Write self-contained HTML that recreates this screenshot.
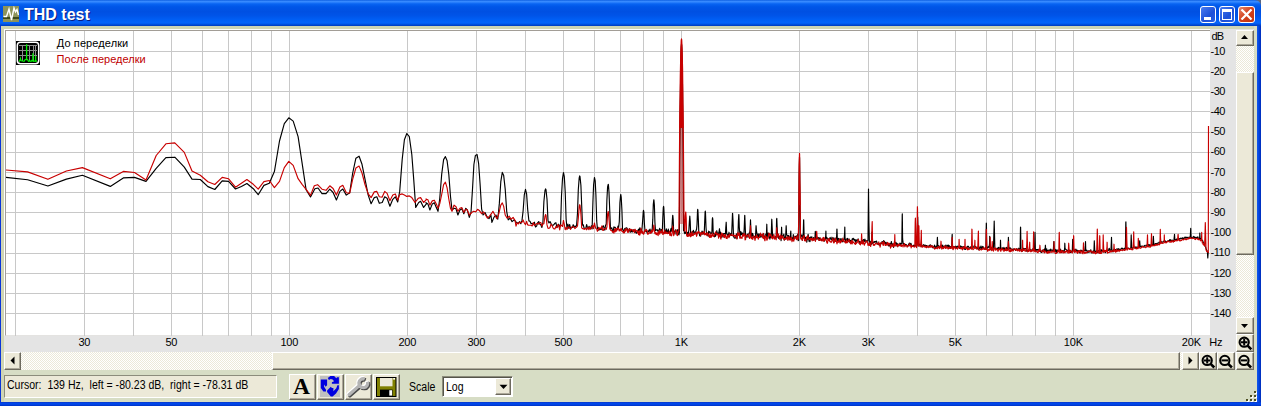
<!DOCTYPE html>
<html><head><meta charset="utf-8"><title>THD test</title>
<style>
html,body{margin:0;padding:0;}
body{width:1261px;height:406px;overflow:hidden;position:relative;background:#d7ddc5;font-family:"Liberation Sans",sans-serif;}
.abs{position:absolute;}
#title{left:0;top:0;width:1261px;height:26px;background:linear-gradient(180deg,#0a5ce0 0%,#3a8cff 5%,#2a80fc 9%,#0864f2 15%,#0056e8 26%,#0050e2 45%,#0054e8 60%,#005ef4 75%,#0464fa 86%,#025cf0 91%,#004cd8 95%,#003cbc 100%);}
#ttext{left:24px;top:4.5px;font-weight:bold;font-size:16px;line-height:19px;color:#fff;text-shadow:1px 1px 0 #0a1a80;white-space:nowrap;}
#bl{left:0;top:26px;width:1px;height:380px;background:#0a35d8;}
#br{left:1256.6px;top:26px;width:4.4px;height:380px;background:linear-gradient(90deg,#1458ec,#0044e0 50%,#002cb8);}
#bb{left:0;top:402px;width:1261px;height:4px;background:linear-gradient(180deg,#0a34c4 0%,#0048ec 30%,#0044e4 60%,#0032c4 100%);}
.cb{top:6px;width:16px;height:17px;border-radius:3px;box-sizing:border-box;border:1px solid #fff;}
#plotframe{left:4px;top:29px;width:1250px;height:341px;background:#e4e4e4;}
.btn{background:#ece9d8;box-sizing:border-box;border:1px solid;border-color:#fff #6d6a5e #6d6a5e #fff;box-shadow:inset -1px -1px 0 #aca899;}
.track{background:#f6f5ec;background-image:conic-gradient(#fff 25%,#ece9d8 0 50%,#fff 0 75%,#ece9d8 0);background-size:2px 2px;}
#status{left:4px;top:375px;width:273px;height:23px;box-sizing:border-box;background:#ece9d8;border:1px solid;border-color:#8c8c7c #fff #fff #8c8c7c;}
#stext{left:7px;top:378px;font-size:12px;line-height:14px;color:#000;white-space:pre;transform:scaleX(.878);transform-origin:0 0;}
.nar{font-size:12px;line-height:14px;color:#000;white-space:pre;transform:scaleX(.878);transform-origin:0 0;}
.tb{top:374px;width:27px;height:26px;}
svg text{font-family:"Liberation Sans",sans-serif;font-size:11px;fill:#000;letter-spacing:-0.2px;}
</style></head><body>
<div id="title" class="abs"></div>
<svg class="abs" style="left:3px;top:6px" width="16" height="16" viewBox="0 0 16 16"><rect width="16" height="16" fill="#8d935a"/><rect y="11" width="16" height="2" fill="#3d4a1c"/><polyline points="0.5,10.5 3.5,10.5 6,3 8.5,14 11,2 12.5,6 14,3.5 15.5,9" fill="none" stroke="#fff" stroke-width="1.4"/></svg>
<div id="ttext" class="abs">THD test</div>
<div class="abs cb" style="left:1200px;background:linear-gradient(135deg,#4a7cf0,#1c50d8 60%,#2a62e4)"><div class="abs" style="left:3px;top:10px;width:7px;height:3px;background:#fff"></div></div>
<div class="abs cb" style="left:1219px;background:linear-gradient(135deg,#4a7cf0,#1c50d8 60%,#2a62e4)"><div class="abs" style="left:2px;top:2px;width:10px;height:11px;box-sizing:border-box;border:1px solid #fff;border-top-width:3px"></div></div>
<div class="abs cb" style="left:1238px;width:17px;background:linear-gradient(135deg,#e88a6c,#d2401c 50%,#c03410)"><svg class="abs" style="left:1px;top:2px" width="13" height="11" viewBox="0 0 13 11"><path d="M1.5 0.5 L11.5 10.5 M11.5 0.5 L1.5 10.5" stroke="#fff" stroke-width="2.2" fill="none"/></svg></div>
<svg class="abs" style="left:1253px;top:0" width="8" height="8" viewBox="0 0 8 8"><path d="M2 0H8V6A6 6 0 0 0 2 0z" fill="#5b6680"/></svg>
<div id="bl" class="abs"></div><div id="br" class="abs"></div><div id="bb" class="abs"></div>
<div class="abs" style="left:1px;top:26px;width:1253px;height:3px;background:#cfd5b4"></div><div class="abs" style="left:1px;top:26px;width:3px;height:376px;background:#cfd5b4"></div>
<div id="plotframe" class="abs"></div>
<svg class="abs" style="left:0;top:0" width="1261" height="406" viewBox="0 0 1261 406">
<rect x="4" y="29" width="1206" height="307" fill="#fff"/><rect x="4" y="335.5" width="1232" height="17" fill="#e4e4e4"/><rect x="5" y="30" width="1205" height="305.5" fill="#a29d96"/><rect x="6" y="31" width="1204" height="304.5" fill="#fff"/>
<g stroke="#c8c8c8" stroke-width="1" shape-rendering="crispEdges">
<line x1="15.5" y1="31" x2="15.5" y2="335.5"/>
<line x1="84.5" y1="31" x2="84.5" y2="335.5"/>
<line x1="133.5" y1="31" x2="133.5" y2="335.5"/>
<line x1="171.5" y1="31" x2="171.5" y2="335.5"/>
<line x1="202.5" y1="31" x2="202.5" y2="335.5"/>
<line x1="228.5" y1="31" x2="228.5" y2="335.5"/>
<line x1="251.5" y1="31" x2="251.5" y2="335.5"/>
<line x1="271.5" y1="31" x2="271.5" y2="335.5"/>
<line x1="289.5" y1="31" x2="289.5" y2="335.5"/>
<line x1="407.5" y1="31" x2="407.5" y2="335.5"/>
<line x1="476.5" y1="31" x2="476.5" y2="335.5"/>
<line x1="525.5" y1="31" x2="525.5" y2="335.5"/>
<line x1="563.5" y1="31" x2="563.5" y2="335.5"/>
<line x1="594.5" y1="31" x2="594.5" y2="335.5"/>
<line x1="620.5" y1="31" x2="620.5" y2="335.5"/>
<line x1="643.5" y1="31" x2="643.5" y2="335.5"/>
<line x1="663.5" y1="31" x2="663.5" y2="335.5"/>
<line x1="681.5" y1="31" x2="681.5" y2="335.5"/>
<line x1="799.5" y1="31" x2="799.5" y2="335.5"/>
<line x1="868.5" y1="31" x2="868.5" y2="335.5"/>
<line x1="917.5" y1="31" x2="917.5" y2="335.5"/>
<line x1="955.5" y1="31" x2="955.5" y2="335.5"/>
<line x1="986.5" y1="31" x2="986.5" y2="335.5"/>
<line x1="1012.5" y1="31" x2="1012.5" y2="335.5"/>
<line x1="1035.5" y1="31" x2="1035.5" y2="335.5"/>
<line x1="1055.5" y1="31" x2="1055.5" y2="335.5"/>
<line x1="1073.5" y1="31" x2="1073.5" y2="335.5"/>
<line x1="1191.5" y1="31" x2="1191.5" y2="335.5"/>
<line x1="6" y1="51.5" x2="1210" y2="51.5"/>
<line x1="6" y1="71.5" x2="1210" y2="71.5"/>
<line x1="6" y1="91.5" x2="1210" y2="91.5"/>
<line x1="6" y1="111.5" x2="1210" y2="111.5"/>
<line x1="6" y1="132.5" x2="1210" y2="132.5"/>
<line x1="6" y1="152.5" x2="1210" y2="152.5"/>
<line x1="6" y1="172.5" x2="1210" y2="172.5"/>
<line x1="6" y1="192.5" x2="1210" y2="192.5"/>
<line x1="6" y1="212.5" x2="1210" y2="212.5"/>
<line x1="6" y1="233.5" x2="1210" y2="233.5"/>
<line x1="6" y1="253.5" x2="1210" y2="253.5"/>
<line x1="6" y1="273.5" x2="1210" y2="273.5"/>
<line x1="6" y1="293.5" x2="1210" y2="293.5"/>
<line x1="6" y1="313.5" x2="1210" y2="313.5"/>
</g>
<g fill="none" stroke-width="1.15" stroke-linejoin="round">
<path stroke="#000" d="M6.0 177.4 L27.6 179.7 L47.9 186.0 L66.4 179.1 L82.4 175.3 L110.3 186.4 L123.3 177.9 L134.5 177.4 L146.0 181.4 L156.2 168.3 L165.9 157.6 L174.8 157.2 L184.3 167.1 L192.0 179.1 L200.3 179.5 L207.9 186.6 L214.8 189.5 L222.2 180.9 L228.6 181.4 L235.5 189.0 L241.4 186.5 L246.9 183.5 L253.3 188.7 L258.2 194.7 L263.9 185.4 L269.3 183.2 L274.4 171.6 L279.5 141.0 L284.3 123.7 L288.8 117.8 L293.2 121.1 L298.1 136.6 L302.1 163.2 L306.1 189.8 L310.5 196.9 L314.9 188.7 L318.0 188.0 L322.0 193.6 L326.0 193.6 L329.8 189.2 L333.1 192.5 L336.4 200.0 L339.9 191.4 L342.8 189.0 L346.3 195.1 L349.7 192.7 L352.7 173.0 L355.9 158.2 L359.1 156.2 L362.0 164.3 L365.0 179.1 L368.2 195.1 L371.1 203.7 L374.3 197.6 L376.8 196.8 L379.3 203.3 L382.2 202.5 L384.7 196.8 L387.1 198.3 L389.9 206.2 L392.8 199.3 L395.3 196.8 L397.7 202.0 L399.7 191.4 L402.2 159.4 L404.4 139.7 L406.8 133.5 L409.3 136.7 L411.8 154.5 L413.7 179.1 L415.7 207.4 L418.7 202.5 L420.6 201.3 L423.6 207.4 L426.6 203.7 L425.9 202.7 L427.9 203.9 L429.9 210.0 L432.3 203.9 L434.3 202.7 L436.3 207.6 L438.0 211.3 L439.7 199.0 L441.7 174.3 L443.6 159.6 L445.4 156.6 L447.1 160.8 L448.8 174.3 L450.5 196.5 L452.0 210.0 L454.0 208.3 L456.0 208.8 L457.9 215.0 L459.9 210.0 L461.9 208.8 L463.8 213.7 L465.8 208.3 L467.3 210.0 L469.3 217.4 L471.0 212.5 L472.5 189.1 L473.9 164.5 L475.4 155.4 L477.1 154.6 L478.6 163.3 L480.1 184.2 L481.6 208.8 L483.1 215.0 L485.0 212.5 L487.0 216.7 L489.0 218.7 L490.9 215.0 L491.9 222.4 L493.9 217.4 L495.9 215.0 L497.8 219.2 L499.3 203.9 L500.8 181.7 L502.3 172.4 L503.7 175.6 L505.2 189.1 L506.7 211.3 L508.2 219.9 L510.1 218.2 L512.1 221.6 L514.1 219.9 L516.0 221.9 L517.2 222.8 L518.4 223.0 L519.6 221.6 L520.8 223.7 L522.0 220.4 L523.1 211.0 L524.3 194.8 L525.5 189.4 L525.5 189.4 L526.6 193.9 L527.7 209.6 L528.9 220.9 L530.0 221.2 L531.1 223.7 L532.2 223.4 L533.3 223.9 L534.4 222.2 L535.5 227.0 L536.6 226.1 L537.6 222.8 L538.7 221.5 L539.8 224.0 L540.8 224.7 L541.9 227.5 L542.9 222.5 L543.9 201.5 L545.0 190.5 L545.6 188.9 L546.0 189.8 L547.0 199.3 L548.0 220.8 L549.0 223.0 L550.0 221.5 L551.0 223.6 L552.0 225.0 L553.0 225.4 L554.0 224.5 L554.9 223.2 L555.9 222.7 L556.8 227.2 L557.8 226.9 L558.7 224.2 L559.7 226.8 L560.6 224.9 L561.5 195.7 L562.5 178.7 L563.4 172.8 L563.5 172.7 L564.3 176.6 L565.2 191.6 L566.1 219.0 L567.0 228.3 L567.9 224.0 L568.8 228.4 L569.7 224.5 L570.6 228.7 L571.5 227.7 L572.4 227.5 L573.2 224.7 L574.1 227.3 L574.9 226.1 L575.8 226.6 L576.6 225.2 L577.5 213.0 L578.3 189.7 L579.2 177.9 L579.7 175.9 L580.0 176.5 L580.9 185.2 L581.7 205.8 L582.5 225.1 L583.3 224.8 L584.1 228.1 L585.0 228.7 L585.8 228.4 L586.6 224.5 L587.4 227.4 L588.1 229.0 L589.0 226.4 L589.7 227.5 L590.5 228.6 L591.3 225.9 L592.1 229.0 L592.9 202.6 L593.6 184.7 L594.4 177.8 L594.5 177.6 L595.2 180.9 L595.9 194.8 L596.7 220.9 L597.4 228.7 L598.2 227.4 L598.9 230.3 L599.7 228.3 L600.4 229.3 L601.1 229.7 L601.9 228.0 L602.6 226.6 L603.3 225.8 L604.1 228.0 L604.8 230.2 L605.5 225.4 L606.2 224.2 L606.9 199.7 L607.6 186.9 L608.2 184.3 L608.4 184.6 L609.0 192.3 L609.8 211.9 L610.5 229.0 L611.1 228.4 L611.8 227.8 L612.5 230.7 L613.2 231.4 L613.9 226.9 L614.6 227.4 L615.3 227.4 L615.9 228.6 L616.6 229.7 L617.3 229.6 L618.0 226.1 L618.6 227.5 L619.3 221.7 L619.9 202.7 L620.6 195.0 L620.8 194.6 L621.2 197.1 L621.9 209.8 L622.5 228.9 L623.2 230.2 L623.8 232.3 L624.5 228.9 L625.1 228.3 L625.8 228.1 L626.4 227.9 L627.0 228.1 L627.7 229.8 L628.3 231.0 L628.9 230.7 L629.5 228.7 L630.2 232.3 L630.8 229.3 L631.4 231.8 L632.0 229.8 L632.6 232.0 L633.2 231.3 L633.9 229.7 L634.5 232.5 L635.1 231.9 L635.7 231.5 L636.3 233.3 L636.9 232.0 L637.5 231.7 L638.0 230.3 L638.6 229.2 L639.2 231.2 L639.8 227.9 L640.4 229.0 L641.0 230.0 L641.6 231.7 L642.1 227.8 L642.7 219.9 L643.3 211.1 L643.5 210.4 L643.9 212.2 L644.4 223.6 L645.0 231.0 L645.6 230.7 L646.1 231.8 L646.7 230.0 L647.3 233.3 L647.8 231.8 L648.4 231.8 L648.9 230.1 L649.5 231.2 L650.0 229.1 L650.6 232.3 L651.1 232.6 L651.7 231.2 L652.2 229.6 L652.8 219.4 L653.3 204.3 L653.8 199.9 L653.9 199.9 L654.4 205.4 L654.9 222.2 L655.5 230.7 L656.0 230.1 L656.5 230.0 L657.1 229.6 L657.6 230.7 L658.1 231.4 L658.6 231.0 L659.2 229.6 L659.7 228.4 L660.2 230.3 L660.7 230.2 L661.3 229.5 L661.8 231.0 L662.3 231.4 L662.8 217.7 L663.3 207.6 L663.6 206.4 L663.8 207.6 L664.3 218.0 L664.8 233.1 L665.3 230.6 L665.8 232.2 L666.3 228.9 L666.9 231.7 L667.3 230.9 L667.8 232.7 L668.3 229.1 L668.8 233.4 L669.3 231.2 L669.8 233.5 L670.3 232.9 L670.8 229.1 L671.3 228.3 L671.8 231.3 L672.3 220.7 L672.7 215.3 L672.8 215.3 L673.2 219.6 L673.7 233.4 L674.2 232.8 L674.7 231.1 L675.1 231.4 L675.6 229.9 L676.1 234.2 L676.6 231.3 L677.0 232.0 L677.5 229.9 L678.0 229.6 L678.4 234.4 L678.9 234.8 L679.4 232.6 L679.8 163.1 L680.3 102.3 L680.8 65.0 L681.2 46.8 L681.5 44.0 L681.7 45.2 L682.1 59.2 L682.6 92.8 L683.0 149.4 L683.5 230.5 L684.0 230.5 L684.4 232.7 L684.9 233.6 L685.3 231.8 L685.8 233.2 L686.2 232.3 L686.6 234.7 L687.1 235.0 L687.5 232.4 L688.0 235.0 L688.5 232.2 L688.9 230.1 L689.4 221.4 L689.8 216.0 L689.8 216.0 L690.2 221.1 L690.7 235.2 L691.1 232.6 L691.6 235.1 L692.0 234.1 L692.5 231.5 L693.0 231.3 L693.4 230.4 L693.9 233.5 L694.3 233.9 L694.8 231.9 L695.2 233.6 L695.6 233.6 L696.1 230.1 L696.5 229.9 L697.0 224.8 L697.5 211.5 L697.7 209.4 L697.9 210.2 L698.4 220.8 L698.8 232.6 L699.2 233.1 L699.7 235.8 L700.1 233.9 L700.6 236.2 L701.0 232.7 L701.5 233.9 L702.0 231.1 L702.4 231.7 L702.9 233.9 L703.3 232.2 L703.8 233.2 L704.2 234.3 L704.6 224.2 L705.1 212.1 L705.3 211.0 L705.5 213.0 L706.0 227.3 L706.5 234.2 L706.9 234.6 L707.4 233.1 L707.8 235.4 L708.2 236.2 L708.7 231.1 L709.1 232.4 L709.6 231.9 L710.0 231.9 L710.5 233.4 L711.0 233.9 L711.4 233.2 L711.9 232.2 L712.3 219.6 L712.5 217.7 L712.8 219.2 L713.2 233.2 L713.6 233.1 L714.1 234.2 L714.5 236.8 L715.0 234.1 L715.5 236.3 L715.9 233.6 L716.4 234.6 L716.8 230.7 L717.2 233.4 L717.7 233.4 L718.1 233.1 L718.6 234.5 L719.0 232.1 L719.5 228.7 L719.5 228.7 L720.0 234.5 L720.4 232.0 L720.9 234.7 L721.3 237.3 L721.8 235.6 L722.2 235.1 L722.6 234.2 L723.1 237.3 L723.5 233.8 L724.0 233.5 L724.5 233.5 L724.9 233.7 L725.4 234.9 L725.8 227.5 L726.2 222.2 L726.2 222.5 L726.7 233.8 L727.1 234.5 L727.6 236.2 L728.0 234.1 L728.5 236.6 L729.0 232.2 L729.4 236.6 L729.9 234.3 L730.3 234.4 L730.8 233.4 L731.2 235.0 L731.6 235.5 L732.1 223.8 L732.5 213.4 L732.6 213.3 L733.0 220.6 L733.5 235.9 L733.9 237.1 L734.4 237.9 L734.8 238.2 L735.2 238.1 L735.7 237.3 L736.1 236.2 L736.6 233.8 L737.0 238.6 L737.5 233.5 L738.0 233.9 L738.4 221.2 L738.8 214.5 L738.9 214.7 L739.3 227.3 L739.8 233.5 L740.2 236.8 L740.6 231.6 L741.1 232.0 L741.5 234.7 L742.0 233.3 L742.5 233.0 L742.9 235.0 L743.4 234.2 L743.8 235.6 L744.2 228.4 L744.7 215.5 L744.8 215.4 L745.1 223.2 L745.6 236.5 L746.0 235.2 L746.5 235.8 L747.0 237.5 L747.4 234.4 L747.9 234.1 L748.3 236.0 L748.8 236.3 L749.2 232.9 L749.6 233.4 L750.1 229.6 L750.5 219.8 L750.5 219.8 L751.0 232.0 L751.5 235.2 L751.9 237.4 L752.4 233.3 L752.8 233.8 L753.2 235.6 L753.7 237.7 L754.1 236.6 L754.6 237.2 L755.0 236.0 L755.5 236.5 L756.0 227.1 L756.1 225.7 L756.4 230.5 L756.9 233.3 L757.3 236.1 L757.8 236.1 L758.2 233.8 L758.6 237.5 L759.1 237.4 L759.5 234.2 L760.0 234.8 L760.5 236.1 L760.9 237.3 L761.4 234.9 L761.8 235.6 L762.2 236.2 L762.7 234.7 L763.1 236.4 L763.6 233.6 L764.0 235.6 L764.5 238.0 L765.0 236.8 L765.4 235.9 L765.9 234.0 L766.3 237.7 L766.8 224.2 L767.2 237.4 L767.6 234.1 L768.1 233.0 L768.5 233.2 L769.0 236.9 L769.5 237.6 L769.9 239.2 L770.4 235.8 L770.8 233.9 L771.2 237.2 L771.7 220.4 L771.8 219.2 L772.1 226.0 L772.6 236.4 L773.0 234.3 L773.5 237.3 L774.0 237.8 L774.4 237.3 L774.9 237.8 L775.3 236.7 L775.8 236.7 L776.2 237.8 L776.6 219.3 L776.8 218.3 L777.1 226.2 L777.5 234.3 L778.0 237.5 L778.5 238.3 L778.9 235.9 L779.4 237.8 L779.8 237.1 L780.2 236.4 L780.7 235.5 L781.1 240.6 L781.6 227.2 L781.6 227.3 L782.0 238.2 L782.5 236.2 L783.0 235.8 L783.4 235.2 L783.9 234.2 L784.3 240.2 L784.8 237.0 L785.2 239.3 L785.6 237.7 L786.1 227.0 L786.2 225.7 L786.5 234.0 L787.0 235.1 L787.5 235.8 L787.9 236.5 L788.4 235.4 L788.8 236.2 L789.2 239.6 L789.7 237.6 L790.1 239.1 L790.6 233.4 L790.8 231.0 L791.0 237.7 L791.5 237.4 L792.0 239.8 L792.4 237.8 L792.9 239.4 L793.3 234.6 L793.8 239.9 L794.2 238.9 L794.6 237.7 L795.1 236.2 L795.5 236.6 L796.0 236.7 L796.5 237.0 L796.9 235.6 L797.4 236.1 L797.8 234.1 L798.2 240.6 L798.7 240.3 L799.1 176.2 L799.5 157.0 L799.6 158.3 L800.0 205.7 L800.5 236.1 L801.0 235.7 L801.4 236.2 L801.9 234.8 L802.3 240.3 L802.8 237.2 L803.2 235.9 L803.6 220.1 L803.7 219.8 L804.1 235.7 L804.5 236.7 L805.0 239.7 L805.5 237.4 L805.9 238.8 L806.4 237.1 L806.8 242.1 L807.2 238.6 L807.7 239.1 L808.1 234.3 L808.6 237.0 L809.0 241.2 L809.5 237.6 L810.0 241.7 L810.4 237.0 L810.9 237.1 L811.3 237.4 L811.8 236.8 L812.2 239.6 L812.6 238.8 L813.1 239.6 L813.5 237.5 L814.0 240.1 L814.5 239.0 L814.9 239.5 L815.3 231.4 L815.4 231.7 L815.8 237.9 L816.2 239.3 L816.7 236.6 L817.1 237.7 L817.6 238.4 L818.0 239.3 L818.5 237.6 L819.0 240.0 L819.4 240.4 L819.9 237.6 L820.3 239.6 L820.8 239.3 L821.2 239.6 L821.6 240.6 L822.1 239.7 L822.5 239.1 L823.0 239.1 L823.5 239.0 L823.9 240.5 L824.4 241.1 L824.8 238.9 L825.2 238.8 L825.7 236.1 L825.9 231.0 L826.1 239.1 L826.6 237.3 L827.0 237.9 L827.5 238.2 L828.0 239.5 L828.4 239.5 L828.9 239.0 L829.3 238.8 L829.8 238.1 L830.2 237.4 L830.6 239.2 L831.1 239.2 L831.5 239.5 L832.0 237.2 L832.5 238.9 L832.9 240.8 L833.4 238.3 L833.8 237.8 L834.2 238.7 L834.7 241.1 L835.1 239.7 L835.6 241.3 L836.0 238.0 L836.5 239.0 L836.9 229.0 L837.0 229.4 L837.4 240.7 L837.9 240.9 L838.3 238.4 L838.8 238.8 L839.2 241.6 L839.6 239.0 L840.1 241.5 L840.5 239.1 L841.0 238.5 L841.5 240.6 L841.9 241.2 L842.4 241.3 L842.8 242.0 L843.2 241.3 L843.7 239.0 L844.1 239.4 L844.6 233.4 L844.8 227.0 L845.0 237.2 L845.5 241.7 L846.0 240.5 L846.4 239.1 L846.9 240.6 L847.3 238.4 L847.8 238.8 L848.2 241.6 L848.6 239.9 L849.1 239.1 L849.5 241.0 L850.0 242.6 L850.5 240.4 L850.9 240.6 L851.4 241.5 L851.8 241.1 L852.2 238.8 L852.7 239.5 L853.1 238.3 L853.6 238.7 L854.0 240.1 L854.5 239.4 L855.0 240.5 L855.4 242.5 L855.9 239.5 L856.3 241.3 L856.8 240.2 L857.2 240.8 L857.6 240.5 L858.1 238.8 L858.5 240.4 L859.0 242.0 L859.5 241.5 L859.9 243.9 L860.4 242.0 L860.8 243.6 L861.2 241.6 L861.7 240.8 L862.1 241.5 L862.6 240.3 L863.0 240.9 L863.5 239.5 L864.0 241.0 L864.4 241.4 L864.9 239.1 L865.3 240.7 L865.8 241.0 L866.2 242.0 L866.6 240.6 L867.1 241.5 L867.5 240.7 L868.0 240.6 L868.5 189.5 L868.5 189.0 L868.9 222.2 L869.4 242.7 L869.8 242.5 L870.2 241.2 L870.7 243.9 L871.1 242.3 L871.6 244.3 L872.0 232.0 L872.0 232.5 L872.5 243.3 L873.0 242.7 L873.4 242.1 L873.9 242.4 L874.3 241.5 L874.8 242.2 L875.2 241.4 L875.6 242.0 L876.1 241.9 L876.5 241.0 L877.0 243.0 L877.5 243.3 L877.9 244.3 L878.4 243.5 L878.8 244.7 L879.2 243.6 L879.7 244.1 L880.1 245.6 L880.6 243.4 L881.0 243.3 L881.5 242.0 L882.0 243.8 L882.4 241.9 L882.9 241.5 L883.3 241.6 L883.8 240.6 L884.2 242.7 L884.6 241.6 L885.1 243.2 L885.5 244.1 L886.0 242.3 L886.5 243.3 L886.9 243.7 L887.4 243.5 L887.8 243.9 L888.2 244.8 L888.7 245.9 L889.1 244.1 L889.6 245.1 L890.0 246.2 L890.5 243.2 L891.0 243.2 L891.4 241.5 L891.9 245.7 L892.3 243.7 L892.8 244.8 L893.2 244.5 L893.6 247.5 L894.1 244.7 L894.5 241.4 L895.0 244.2 L895.5 243.5 L895.9 242.4 L896.4 244.4 L896.8 243.4 L897.2 246.4 L897.7 243.9 L898.1 245.8 L898.6 245.4 L899.0 245.9 L899.5 244.5 L900.0 243.0 L900.4 244.7 L900.9 244.1 L901.3 243.4 L901.8 243.9 L902.2 215.7 L902.3 213.8 L902.6 238.9 L903.1 242.8 L903.5 244.5 L904.0 243.5 L904.5 245.8 L904.9 245.2 L905.4 244.4 L905.8 245.0 L906.2 244.6 L906.7 245.3 L907.1 245.8 L907.6 246.6 L908.0 246.0 L908.5 244.6 L909.0 243.7 L909.4 243.1 L909.9 245.1 L910.3 244.5 L910.8 243.3 L911.2 244.1 L911.6 246.1 L912.1 246.3 L912.5 246.1 L913.0 246.5 L913.5 245.2 L913.9 246.2 L914.4 245.6 L914.8 245.2 L915.2 245.3 L915.7 245.2 L916.1 246.5 L916.6 245.7 L917.0 244.6 L917.5 224.8 L917.7 217.0 L918.0 229.4 L918.4 246.0 L918.9 245.1 L919.3 244.2 L919.8 244.9 L920.2 244.6 L920.6 244.4 L921.1 246.4 L921.5 246.0 L922.0 245.7 L922.5 246.0 L922.9 246.2 L923.4 244.7 L923.8 244.8 L924.2 245.8 L924.7 245.7 L925.1 245.1 L925.6 245.5 L926.0 246.0 L926.5 245.5 L927.0 247.2 L927.4 246.9 L927.9 246.4 L928.3 246.3 L928.8 245.8 L929.2 246.0 L929.6 245.2 L930.1 246.2 L930.5 244.8 L931.0 246.0 L931.5 246.5 L931.9 245.9 L932.4 247.6 L932.8 246.1 L933.2 247.9 L933.7 247.2 L934.1 246.8 L934.6 245.1 L935.0 246.9 L935.5 247.8 L936.0 247.1 L936.4 246.2 L936.9 247.9 L937.3 239.2 L937.4 237.3 L937.8 246.0 L938.2 246.5 L938.6 245.7 L939.1 246.3 L939.5 246.7 L940.0 247.4 L940.5 247.6 L940.9 246.0 L941.4 245.4 L941.8 245.3 L942.2 247.5 L942.7 245.1 L943.1 246.9 L943.6 247.4 L944.0 247.0 L944.5 246.0 L945.0 247.3 L945.4 246.6 L945.9 245.0 L946.3 245.7 L946.8 246.0 L947.2 247.2 L947.6 245.2 L948.1 246.6 L948.5 245.1 L949.0 247.4 L949.5 245.9 L949.9 247.9 L950.4 247.1 L950.8 246.6 L951.2 246.6 L951.7 247.2 L952.1 234.8 L952.2 234.3 L952.6 247.0 L953.0 246.5 L953.5 247.2 L954.0 247.1 L954.4 246.7 L954.9 247.2 L955.3 247.9 L955.8 246.1 L956.2 246.4 L956.6 248.0 L957.1 247.1 L957.5 246.4 L958.0 246.0 L958.5 247.0 L958.9 246.8 L959.4 248.5 L959.8 247.6 L960.2 247.7 L960.7 245.9 L961.1 247.1 L961.6 246.7 L962.0 248.9 L962.5 247.1 L963.0 246.6 L963.4 246.6 L963.9 247.7 L964.3 249.3 L964.8 248.2 L965.2 248.8 L965.6 249.4 L966.1 247.0 L966.5 247.5 L967.0 248.1 L967.5 246.3 L967.9 246.2 L968.4 246.3 L968.8 247.3 L969.2 248.0 L969.7 247.9 L970.1 248.4 L970.6 246.9 L971.0 247.5 L971.5 248.8 L972.0 246.6 L972.4 247.4 L972.9 247.6 L973.3 247.0 L973.8 246.9 L974.2 245.6 L974.6 246.7 L975.1 247.2 L975.5 246.5 L976.0 247.2 L976.5 247.5 L976.9 247.2 L977.4 247.7 L977.8 249.0 L978.2 248.5 L978.7 249.8 L979.1 246.9 L979.6 248.3 L980.0 248.6 L980.5 247.6 L981.0 246.0 L981.4 248.4 L981.9 248.7 L982.3 247.0 L982.8 246.4 L983.2 248.0 L983.6 247.2 L984.1 248.9 L984.5 248.9 L985.0 249.4 L985.5 247.6 L985.9 247.9 L986.3 223.1 L986.4 223.6 L986.8 247.9 L987.2 248.3 L987.7 247.2 L988.1 247.5 L988.6 246.6 L989.0 247.3 L989.5 244.1 L989.7 236.3 L990.0 247.4 L990.4 247.5 L990.9 249.9 L991.3 248.6 L991.8 247.6 L992.2 248.7 L992.6 248.1 L993.1 249.0 L993.5 246.7 L994.0 228.9 L994.2 221.1 L994.5 233.5 L994.9 248.9 L995.4 249.1 L995.8 248.3 L996.2 249.2 L996.7 249.3 L997.1 248.8 L997.6 248.0 L998.0 249.3 L998.5 247.4 L999.0 250.0 L999.4 247.9 L999.9 249.1 L1000.3 248.0 L1000.5 240.2 L1000.8 249.5 L1001.2 249.3 L1001.6 248.9 L1002.1 247.9 L1002.5 247.9 L1003.0 249.2 L1003.5 249.0 L1003.9 247.3 L1004.4 249.4 L1004.8 249.8 L1005.2 248.2 L1005.7 249.6 L1006.1 249.2 L1006.6 247.4 L1007.0 248.4 L1007.5 250.2 L1008.0 249.6 L1008.4 237.3 L1008.9 249.0 L1009.3 248.4 L1009.8 247.8 L1010.2 247.8 L1010.6 248.8 L1011.1 249.0 L1011.5 249.2 L1012.0 249.4 L1012.5 249.6 L1012.9 249.3 L1013.4 249.8 L1013.8 248.8 L1014.2 249.5 L1014.7 249.3 L1015.1 249.3 L1015.6 250.5 L1016.0 249.8 L1016.5 248.9 L1017.0 248.9 L1017.4 250.2 L1017.9 249.2 L1018.3 249.3 L1018.8 248.2 L1019.2 250.6 L1019.6 249.2 L1020.1 249.6 L1020.5 227.5 L1020.6 227.0 L1021.0 250.2 L1021.5 251.5 L1021.9 249.9 L1022.4 251.2 L1022.8 250.7 L1023.2 249.5 L1023.7 248.3 L1024.2 249.0 L1024.6 248.7 L1025.0 248.9 L1025.5 248.5 L1026.0 249.1 L1026.4 249.1 L1026.8 251.3 L1027.3 250.4 L1027.8 250.5 L1028.2 251.4 L1028.7 249.9 L1029.1 250.6 L1029.5 250.2 L1030.0 249.2 L1030.5 250.0 L1030.9 250.4 L1031.3 249.9 L1031.8 250.9 L1032.2 250.4 L1032.7 248.8 L1033.2 249.6 L1033.6 249.5 L1034.0 250.5 L1034.5 250.0 L1035.0 232.9 L1035.0 232.4 L1035.4 251.2 L1035.8 251.7 L1036.3 249.5 L1036.8 249.6 L1037.2 250.0 L1037.7 249.5 L1038.1 250.4 L1038.5 249.3 L1039.0 250.5 L1039.5 251.2 L1039.9 249.6 L1040.3 250.5 L1040.8 252.0 L1041.2 252.4 L1041.7 252.5 L1042.2 250.1 L1042.6 250.9 L1043.0 250.9 L1043.5 250.1 L1044.0 252.0 L1044.4 249.0 L1044.8 252.0 L1045.3 247.1 L1045.4 245.2 L1045.8 250.9 L1046.2 251.8 L1046.7 248.9 L1047.1 252.0 L1047.5 251.0 L1048.0 250.3 L1048.5 250.6 L1048.9 250.2 L1049.3 249.9 L1049.8 250.7 L1050.2 251.3 L1050.7 249.1 L1051.2 249.9 L1051.6 250.4 L1052.0 250.8 L1052.5 250.2 L1053.0 251.0 L1053.4 249.2 L1053.8 241.6 L1053.8 242.1 L1054.3 251.3 L1054.8 251.0 L1055.2 249.4 L1055.7 251.6 L1056.1 250.0 L1056.5 252.4 L1057.0 249.9 L1057.5 252.0 L1057.9 251.5 L1058.3 250.0 L1058.8 251.5 L1059.2 251.6 L1059.7 250.0 L1060.2 249.1 L1060.6 250.3 L1061.0 251.5 L1061.5 252.5 L1062.0 252.0 L1062.4 250.8 L1062.8 250.5 L1063.3 250.9 L1063.8 251.8 L1064.2 251.6 L1064.7 247.5 L1064.8 243.2 L1065.1 249.3 L1065.5 249.1 L1066.0 249.4 L1066.5 250.1 L1066.9 250.7 L1067.3 251.2 L1067.8 250.6 L1068.2 249.8 L1068.7 251.2 L1069.2 251.4 L1069.6 250.2 L1070.0 250.3 L1070.5 252.5 L1071.0 251.3 L1071.4 251.4 L1071.8 251.9 L1072.3 250.4 L1072.7 239.3 L1072.8 239.8 L1073.2 250.9 L1073.7 248.9 L1074.1 250.9 L1074.5 250.9 L1075.0 249.9 L1075.5 249.6 L1075.9 249.2 L1076.3 250.2 L1076.8 251.0 L1077.2 250.2 L1077.7 251.6 L1078.2 251.2 L1078.6 250.5 L1079.0 250.9 L1079.5 252.9 L1080.0 251.2 L1080.4 252.8 L1080.8 250.1 L1081.3 250.7 L1081.8 250.4 L1082.2 251.3 L1082.7 251.3 L1083.1 250.8 L1083.5 251.9 L1084.0 250.7 L1084.5 250.2 L1084.9 250.5 L1085.3 245.9 L1085.5 241.6 L1085.8 251.0 L1086.2 251.0 L1086.7 250.2 L1087.2 250.9 L1087.6 252.6 L1088.0 252.1 L1088.5 250.9 L1089.0 252.3 L1089.4 251.1 L1089.8 251.7 L1090.3 250.6 L1090.8 249.8 L1091.2 252.1 L1091.7 253.0 L1092.1 252.6 L1092.5 252.6 L1093.0 251.1 L1093.5 251.5 L1093.9 252.3 L1094.3 240.8 L1094.3 241.3 L1094.8 252.1 L1095.2 252.1 L1095.7 251.2 L1096.2 251.6 L1096.6 250.9 L1097.0 251.3 L1097.5 252.6 L1098.0 250.5 L1098.4 250.5 L1098.8 252.7 L1099.3 253.0 L1099.8 252.9 L1100.2 251.6 L1100.7 250.8 L1101.1 249.5 L1101.5 250.5 L1102.0 252.0 L1102.5 251.5 L1102.9 250.3 L1103.3 250.8 L1103.8 252.0 L1104.2 251.7 L1104.7 250.8 L1105.2 252.0 L1105.6 252.6 L1106.0 250.5 L1106.5 250.8 L1107.0 250.9 L1107.4 250.3 L1107.8 250.1 L1108.3 250.4 L1108.8 249.5 L1109.2 248.3 L1109.7 249.8 L1110.1 251.0 L1110.5 250.1 L1111.0 249.8 L1111.5 237.8 L1111.5 237.3 L1111.9 250.8 L1112.3 251.7 L1112.8 250.3 L1113.2 251.8 L1113.7 249.5 L1114.2 249.4 L1114.6 249.8 L1115.0 250.0 L1115.5 249.5 L1116.0 250.7 L1116.4 250.2 L1116.8 248.9 L1117.3 250.9 L1117.8 249.2 L1118.2 248.7 L1118.7 249.6 L1119.1 248.9 L1119.5 250.0 L1120.0 249.6 L1120.5 249.7 L1120.9 249.3 L1121.3 248.2 L1121.8 248.3 L1122.2 248.6 L1122.7 248.3 L1123.2 249.8 L1123.6 249.2 L1124.0 249.5 L1124.5 248.2 L1125.0 248.9 L1125.4 248.4 L1125.8 222.4 L1125.9 221.9 L1126.3 248.6 L1126.8 248.4 L1127.2 248.1 L1127.7 248.3 L1128.1 248.6 L1128.5 248.1 L1129.0 248.4 L1129.5 248.7 L1129.9 248.9 L1130.3 248.4 L1130.8 247.9 L1131.2 234.9 L1131.2 235.4 L1131.7 248.1 L1132.2 247.9 L1132.6 248.3 L1133.0 247.8 L1133.5 247.0 L1134.0 247.2 L1134.4 247.1 L1134.8 248.0 L1135.3 247.6 L1135.8 246.9 L1136.2 247.6 L1136.7 247.2 L1137.1 247.5 L1137.5 247.4 L1138.0 247.1 L1138.5 246.9 L1138.9 246.7 L1139.3 246.9 L1139.7 240.8 L1139.8 242.7 L1140.2 246.6 L1140.7 246.4 L1141.2 246.9 L1141.6 246.7 L1142.0 245.8 L1142.5 246.3 L1143.0 246.9 L1143.4 246.8 L1143.8 246.4 L1144.3 245.4 L1144.8 246.2 L1145.2 246.0 L1145.7 245.6 L1146.1 245.1 L1146.5 245.8 L1147.0 245.0 L1147.5 246.3 L1147.9 244.9 L1148.3 244.5 L1148.8 245.7 L1149.2 245.1 L1149.7 244.7 L1150.2 245.9 L1150.6 245.2 L1151.0 244.9 L1151.5 244.8 L1152.0 244.7 L1152.4 245.1 L1152.8 244.8 L1153.3 238.2 L1153.4 236.3 L1153.8 244.7 L1154.2 243.9 L1154.7 244.4 L1155.1 244.5 L1155.5 243.6 L1156.0 243.5 L1156.5 244.5 L1156.9 243.4 L1157.3 243.5 L1157.8 243.1 L1158.2 243.1 L1158.7 243.0 L1159.2 242.0 L1159.6 243.2 L1160.0 243.2 L1160.5 241.8 L1161.0 242.3 L1161.4 241.7 L1161.8 242.5 L1162.3 242.1 L1162.8 242.0 L1163.2 241.7 L1163.7 241.4 L1164.1 240.9 L1164.5 241.6 L1165.0 240.8 L1165.5 241.6 L1165.9 241.3 L1166.3 242.0 L1166.8 241.7 L1167.2 241.4 L1167.7 241.0 L1168.2 240.9 L1168.6 240.9 L1169.0 241.5 L1169.5 239.9 L1170.0 239.7 L1170.4 240.7 L1170.8 239.8 L1171.3 241.0 L1171.8 240.7 L1172.2 240.4 L1172.7 240.2 L1173.1 241.0 L1173.5 240.9 L1174.0 239.4 L1174.5 234.8 L1174.5 234.3 L1174.9 240.1 L1175.3 239.6 L1175.8 239.6 L1176.2 239.4 L1176.7 239.0 L1177.2 240.0 L1177.6 239.6 L1178.0 239.4 L1178.5 238.8 L1179.0 239.5 L1179.4 238.8 L1179.8 238.6 L1180.3 239.0 L1180.8 238.0 L1181.2 238.2 L1181.7 238.6 L1182.1 238.8 L1182.5 237.8 L1183.0 238.1 L1183.5 238.9 L1183.9 238.0 L1184.3 238.3 L1184.8 237.3 L1185.2 237.0 L1185.7 238.2 L1186.2 237.2 L1186.6 237.5 L1187.0 238.0 L1187.5 237.4 L1188.0 237.6 L1188.4 237.5 L1188.8 237.3 L1189.3 238.1 L1189.8 236.8 L1190.2 237.7 L1190.7 228.9 L1190.7 228.4 L1191.1 237.7 L1191.5 238.0 L1192.0 237.5 L1192.5 237.7 L1192.9 237.2 L1193.3 237.3 L1193.8 236.4 L1194.2 237.5 L1194.7 237.0 L1195.2 238.2 L1195.6 237.4 L1196.0 237.9 L1196.5 237.3 L1197.0 237.8 L1197.4 237.8 L1197.8 236.8 L1198.3 238.1 L1198.8 238.5 L1199.2 239.0 L1199.7 237.3 L1199.8 233.0 L1200.1 237.8 L1200.5 239.2 L1201.0 238.7 L1201.5 240.1 L1201.9 239.9 L1202.3 240.5 L1202.8 241.0 L1203.2 242.5 L1203.7 242.7 L1204.2 244.1 L1204.6 245.2 L1205.0 246.2 L1205.5 247.0 L1206.0 248.4 L1206.4 249.2 L1206.8 250.8 L1207.3 250.8 L1207.8 258.0 L1208.2 252.0"/>
<path stroke="#c80000" d="M6.0 170.0 L27.6 171.9 L47.9 179.3 L66.4 171.0 L82.4 167.6 L110.3 178.8 L123.3 171.4 L134.5 172.5 L146.0 180.0 L156.2 155.5 L165.9 143.8 L174.8 142.9 L184.3 152.4 L192.0 171.0 L200.3 175.3 L207.9 181.7 L214.8 184.5 L222.2 177.4 L228.6 178.8 L235.5 187.2 L241.4 183.3 L246.9 179.5 L253.3 184.3 L258.2 189.2 L263.9 181.6 L269.3 180.5 L274.4 187.6 L279.5 181.4 L284.3 167.6 L288.8 161.4 L293.2 165.4 L298.1 178.7 L302.1 184.3 L306.1 189.4 L310.5 195.4 L314.3 185.8 L317.6 184.7 L322.0 189.2 L326.0 190.3 L329.8 185.8 L333.1 188.5 L336.4 195.1 L339.9 187.0 L342.8 185.3 L346.3 192.7 L349.7 193.2 L352.7 179.1 L355.9 168.0 L359.1 166.1 L362.0 173.0 L365.0 184.5 L368.2 193.9 L371.1 197.6 L374.3 191.9 L376.8 191.4 L379.3 196.8 L382.2 197.1 L384.7 191.4 L387.1 193.4 L389.9 200.8 L392.8 195.1 L395.3 193.9 L397.7 200.0 L399.7 194.6 L402.2 193.9 L404.4 195.1 L406.8 196.4 L409.3 195.9 L411.8 197.6 L415.0 202.5 L418.2 198.3 L420.6 197.6 L423.6 202.5 L426.6 199.3 L425.9 199.0 L427.9 199.7 L429.9 205.1 L432.3 200.9 L434.3 200.2 L436.3 203.9 L438.0 208.3 L439.7 203.9 L441.7 194.5 L443.6 184.7 L445.4 182.2 L447.1 187.9 L448.8 199.0 L450.5 208.3 L452.0 211.3 L454.0 205.1 L456.0 206.8 L457.9 211.3 L459.9 208.3 L461.9 207.6 L463.8 212.5 L465.8 209.3 L467.3 210.0 L469.3 215.0 L471.7 212.5 L473.7 211.3 L475.7 211.8 L477.6 209.3 L479.6 210.8 L481.6 213.7 L483.5 211.8 L485.5 215.0 L487.5 218.2 L489.5 216.2 L491.4 213.7 L492.9 211.3 L494.9 215.0 L496.8 218.7 L498.8 213.7 L500.8 205.1 L502.3 202.9 L503.7 206.4 L505.2 215.0 L507.2 218.2 L509.2 216.2 L511.1 219.2 L513.1 217.4 L515.1 220.6 L516.0 226.1 L517.2 222.8 L518.4 223.9 L519.6 222.2 L520.8 222.6 L522.0 222.3 L523.1 219.9 L524.3 223.0 L525.5 224.7 L526.6 221.4 L527.7 224.9 L528.9 225.3 L530.0 225.2 L531.1 225.2 L532.2 226.0 L533.3 222.6 L534.4 225.5 L535.5 224.6 L536.6 223.8 L537.6 223.4 L538.7 224.1 L539.8 222.5 L540.8 222.5 L541.9 226.0 L542.9 224.0 L543.9 223.6 L545.0 216.1 L545.6 214.5 L546.0 215.4 L547.0 224.9 L548.0 228.3 L549.0 228.4 L550.0 227.5 L551.0 224.1 L552.0 225.5 L553.0 227.8 L554.0 228.9 L554.9 228.9 L555.9 226.6 L556.8 227.7 L557.8 224.7 L558.7 225.2 L559.7 229.9 L560.6 224.8 L561.5 225.4 L562.5 226.5 L563.4 220.6 L563.5 220.5 L564.3 224.4 L565.2 229.7 L566.1 227.6 L567.0 229.6 L567.9 226.9 L568.8 226.7 L569.7 228.2 L570.6 229.3 L571.5 227.1 L572.4 226.8 L573.2 226.8 L574.1 227.1 L574.9 228.6 L575.8 227.6 L576.6 227.2 L577.5 225.9 L578.3 218.5 L579.2 206.7 L579.7 204.7 L580.0 205.3 L580.9 214.0 L581.7 227.8 L582.5 228.6 L583.3 228.5 L584.1 229.5 L585.0 228.5 L585.8 228.4 L586.6 229.8 L587.4 228.0 L588.1 227.4 L589.0 229.7 L589.7 227.1 L590.5 229.2 L591.3 228.3 L592.1 226.6 L592.9 225.6 L593.6 228.7 L594.4 223.2 L594.5 223.0 L595.2 226.3 L595.9 228.5 L596.7 228.9 L597.4 231.3 L598.2 229.9 L598.9 227.4 L599.7 229.0 L600.4 228.1 L601.1 228.5 L601.9 225.9 L602.6 230.2 L603.3 230.5 L604.1 228.4 L604.8 228.7 L605.5 228.8 L606.2 229.3 L606.9 226.9 L607.6 214.1 L608.2 211.5 L608.4 211.8 L609.0 219.5 L609.8 228.7 L610.5 230.0 L611.1 230.4 L611.8 230.4 L612.5 232.3 L613.2 231.2 L613.9 233.1 L614.6 228.8 L615.3 231.8 L615.9 228.4 L616.6 231.1 L617.3 228.7 L618.0 227.8 L618.6 229.1 L619.3 231.0 L619.9 229.0 L620.6 230.4 L621.2 228.3 L621.9 231.2 L622.5 232.0 L623.2 231.1 L623.8 233.0 L624.5 232.8 L625.1 229.1 L625.8 231.2 L626.4 228.8 L627.0 228.9 L627.7 232.3 L628.3 232.3 L628.9 229.0 L629.5 228.9 L630.2 231.1 L630.8 229.3 L631.4 229.6 L632.0 230.0 L632.6 230.1 L633.2 231.4 L633.9 229.7 L634.5 232.7 L635.1 229.2 L635.7 230.8 L636.3 230.7 L636.9 230.5 L637.5 233.0 L638.0 231.5 L638.6 234.7 L639.2 230.7 L639.8 235.1 L640.4 232.6 L641.0 228.2 L641.6 232.5 L642.1 233.3 L642.7 231.1 L643.3 234.2 L643.9 233.9 L644.4 232.1 L645.0 230.0 L645.6 231.2 L646.1 229.4 L646.7 230.3 L647.3 230.9 L647.8 234.4 L648.4 233.0 L648.9 233.6 L649.5 232.8 L650.0 231.6 L650.6 233.4 L651.1 233.1 L651.7 229.8 L652.2 232.2 L652.8 231.4 L653.3 229.4 L653.8 225.0 L653.9 225.0 L654.4 230.5 L654.9 233.6 L655.5 232.4 L656.0 234.4 L656.5 234.6 L657.1 232.5 L657.6 234.0 L658.1 235.7 L658.6 232.1 L659.2 230.5 L659.7 234.2 L660.2 231.1 L660.7 231.4 L661.3 233.0 L661.8 232.1 L662.3 229.4 L662.8 234.4 L663.3 234.2 L663.8 232.1 L664.3 233.7 L664.8 230.4 L665.3 232.6 L665.8 233.6 L666.3 233.2 L666.9 231.9 L667.3 233.7 L667.8 233.0 L668.3 233.2 L668.8 233.3 L669.3 231.3 L669.8 235.3 L670.3 232.2 L670.8 235.3 L671.3 235.9 L671.8 235.2 L672.3 231.4 L672.7 226.0 L672.8 226.0 L673.2 230.3 L673.7 235.6 L674.2 234.1 L674.7 232.9 L675.1 231.2 L675.6 230.9 L676.1 229.9 L676.6 231.8 L677.0 235.2 L677.5 235.6 L678.0 231.3 L678.4 232.2 L678.9 230.6 L679.4 162.7 L679.8 112.0 L680.3 75.1 L680.8 52.1 L681.2 40.7 L681.5 38.9 L681.7 39.6 L682.1 48.5 L682.6 69.3 L683.0 103.7 L683.5 152.6 L684.0 218.2 L684.4 231.1 L684.9 230.7 L685.3 216.0 L685.7 212.0 L685.8 212.1 L686.2 218.1 L686.6 234.9 L687.1 236.2 L687.5 236.5 L688.0 234.0 L688.5 235.9 L688.9 236.3 L689.4 235.4 L689.8 232.8 L690.2 235.3 L690.7 236.8 L691.1 233.2 L691.6 235.9 L692.0 231.6 L692.5 235.2 L693.0 235.6 L693.4 235.1 L693.9 233.7 L694.3 233.0 L694.8 234.3 L695.2 233.4 L695.6 233.3 L696.1 232.2 L696.5 236.3 L697.0 235.0 L697.5 232.0 L697.9 233.1 L698.4 231.5 L698.8 231.5 L699.2 232.7 L699.7 233.3 L700.1 232.9 L700.6 235.4 L701.0 232.8 L701.5 233.3 L702.0 232.4 L702.4 234.3 L702.9 234.0 L703.3 232.7 L703.8 232.1 L704.2 231.2 L704.6 234.8 L705.1 234.6 L705.5 233.5 L706.0 234.6 L706.5 233.0 L706.9 235.6 L707.4 232.8 L707.8 233.8 L708.2 234.0 L708.7 235.2 L709.1 236.7 L709.6 237.3 L710.0 233.6 L710.5 237.3 L711.0 235.1 L711.4 237.1 L711.9 236.5 L712.3 233.3 L712.8 233.8 L713.2 235.8 L713.6 236.6 L714.1 235.3 L714.5 234.8 L715.0 233.9 L715.5 231.9 L715.9 232.7 L716.4 233.8 L716.8 235.0 L717.2 233.5 L717.7 234.7 L718.1 234.4 L718.6 238.2 L719.0 233.8 L719.5 236.4 L720.0 234.4 L720.4 237.6 L720.9 239.1 L721.3 236.4 L721.8 232.9 L722.2 233.8 L722.6 233.9 L723.1 236.6 L723.5 235.6 L724.0 234.7 L724.5 237.6 L724.9 236.6 L725.4 234.5 L725.8 236.5 L726.2 238.5 L726.7 236.9 L727.1 238.6 L727.6 235.9 L728.0 235.1 L728.5 236.4 L729.0 237.7 L729.4 234.3 L729.9 235.7 L730.3 235.4 L730.8 235.4 L731.2 234.9 L731.6 234.2 L732.1 234.9 L732.5 235.8 L733.0 235.4 L733.5 235.0 L733.9 235.5 L734.4 235.2 L734.8 236.6 L735.2 236.8 L735.7 235.1 L736.1 236.3 L736.6 237.8 L737.0 239.0 L737.5 232.9 L738.0 235.6 L738.4 235.4 L738.9 232.9 L739.3 233.1 L739.8 238.2 L740.2 236.1 L740.6 238.1 L741.1 237.2 L741.5 237.9 L742.0 238.4 L742.5 235.5 L742.9 234.2 L743.4 236.1 L743.8 233.9 L744.2 235.1 L744.7 233.6 L745.1 240.0 L745.6 239.4 L746.0 235.4 L746.5 235.2 L747.0 235.9 L747.4 235.5 L747.9 235.9 L748.3 234.3 L748.8 237.5 L749.2 237.4 L749.6 238.5 L750.1 235.5 L750.5 225.7 L750.5 225.7 L751.0 237.9 L751.5 238.7 L751.9 237.4 L752.4 238.9 L752.8 239.3 L753.2 236.2 L753.7 236.0 L754.1 236.7 L754.6 238.0 L755.0 240.5 L755.5 238.0 L756.0 235.8 L756.4 237.7 L756.9 235.1 L757.3 237.5 L757.8 237.1 L758.2 239.2 L758.6 238.3 L759.1 237.1 L759.5 237.5 L760.0 234.8 L760.5 233.1 L760.9 235.3 L761.4 234.9 L761.8 235.8 L762.2 234.8 L762.7 238.0 L763.1 233.2 L763.6 238.4 L764.0 236.6 L764.5 239.7 L765.0 240.8 L765.4 235.3 L765.9 237.5 L766.3 236.8 L766.8 240.2 L767.2 240.0 L767.6 237.8 L768.1 238.3 L768.5 235.1 L769.0 233.1 L769.5 233.6 L769.9 235.9 L770.4 235.5 L770.8 234.6 L771.2 236.1 L771.7 238.2 L772.1 236.9 L772.6 238.9 L773.0 237.5 L773.5 235.7 L774.0 234.8 L774.4 239.1 L774.9 237.2 L775.3 238.6 L775.8 238.8 L776.2 239.8 L776.6 228.7 L776.8 227.7 L777.1 235.6 L777.5 237.0 L778.0 234.5 L778.5 234.0 L778.9 236.1 L779.4 239.2 L779.8 238.2 L780.2 237.5 L780.7 234.8 L781.1 239.1 L781.6 236.2 L782.0 237.6 L782.5 235.8 L783.0 237.5 L783.4 238.8 L783.9 238.2 L784.3 240.0 L784.8 238.6 L785.2 239.0 L785.6 238.3 L786.1 238.7 L786.5 237.0 L787.0 239.3 L787.5 236.8 L787.9 240.5 L788.4 238.0 L788.8 238.6 L789.2 236.4 L789.7 239.8 L790.1 240.0 L790.6 237.9 L791.0 239.8 L791.5 237.2 L792.0 241.6 L792.4 240.4 L792.9 239.3 L793.3 240.1 L793.8 241.2 L794.2 236.4 L794.6 237.6 L795.1 238.2 L795.5 237.4 L796.0 238.1 L796.5 239.7 L796.9 236.0 L797.4 236.0 L797.8 239.5 L798.2 238.3 L798.7 221.4 L799.1 165.3 L799.5 153.3 L799.6 154.1 L800.0 183.6 L800.5 237.9 L801.0 239.1 L801.4 238.2 L801.9 238.6 L802.3 240.3 L802.8 237.3 L803.2 236.4 L803.6 237.8 L804.1 235.3 L804.5 240.6 L805.0 239.7 L805.5 240.5 L805.9 241.1 L806.4 238.1 L806.8 237.0 L807.2 239.1 L807.7 236.0 L808.1 235.8 L808.6 237.9 L809.0 239.4 L809.5 239.4 L810.0 239.6 L810.4 238.3 L810.9 239.8 L811.3 238.5 L811.8 238.9 L812.2 240.8 L812.6 238.3 L813.1 238.9 L813.5 240.3 L814.0 239.6 L814.5 237.9 L814.9 239.1 L815.4 241.4 L815.8 239.3 L816.2 238.6 L816.7 231.4 L817.1 237.0 L817.6 237.9 L818.0 238.5 L818.5 239.8 L819.0 240.3 L819.4 239.3 L819.9 239.3 L820.3 240.4 L820.8 238.2 L821.2 239.4 L821.6 240.2 L822.1 241.0 L822.5 239.9 L823.0 237.5 L823.5 241.1 L823.9 237.4 L824.4 239.4 L824.8 240.4 L825.2 239.3 L825.7 239.6 L826.1 239.7 L826.6 241.6 L827.0 242.9 L827.5 243.2 L828.0 238.7 L828.4 240.7 L828.9 240.2 L829.3 238.5 L829.8 241.7 L830.2 241.2 L830.6 241.8 L831.1 242.5 L831.5 241.5 L832.0 240.1 L832.5 240.0 L832.9 238.0 L833.4 242.1 L833.8 242.9 L834.2 242.8 L834.7 239.5 L835.1 241.3 L835.6 238.1 L836.0 239.5 L836.5 241.7 L837.0 243.9 L837.4 241.9 L837.9 240.9 L838.3 242.3 L838.8 242.0 L839.2 239.5 L839.6 239.2 L840.1 243.1 L840.5 240.8 L841.0 242.3 L841.5 241.5 L841.9 240.8 L842.4 240.0 L842.8 238.0 L843.2 241.2 L843.7 240.1 L844.1 241.4 L844.6 241.1 L845.0 242.7 L845.5 242.4 L846.0 243.1 L846.4 239.9 L846.9 242.4 L847.3 242.7 L847.8 241.9 L848.2 240.7 L848.6 240.2 L849.1 239.3 L849.5 242.0 L850.0 241.6 L850.5 243.4 L850.9 243.9 L851.4 240.8 L851.8 240.6 L852.2 243.9 L852.7 241.0 L853.1 242.2 L853.6 242.4 L854.0 242.7 L854.5 243.6 L855.0 243.8 L855.4 244.4 L855.9 242.4 L856.3 243.6 L856.8 242.2 L857.2 242.6 L857.6 241.5 L858.1 239.6 L858.5 239.5 L859.0 243.4 L859.5 243.4 L859.9 244.4 L860.4 244.8 L860.8 241.9 L861.2 243.8 L861.6 233.9 L861.7 235.8 L862.1 242.5 L862.6 244.0 L863.0 243.3 L863.5 240.9 L864.0 244.5 L864.4 245.2 L864.9 243.0 L865.3 243.2 L865.8 242.0 L866.2 240.9 L866.6 241.4 L867.1 241.6 L867.5 242.4 L868.0 245.4 L868.5 245.3 L868.9 243.6 L869.4 245.4 L869.8 242.4 L870.2 245.2 L870.7 246.5 L871.1 243.6 L871.6 241.9 L872.0 225.9 L872.2 221.6 L872.5 239.7 L873.0 243.5 L873.4 245.4 L873.9 244.2 L874.3 245.4 L874.8 245.0 L875.2 244.1 L875.6 243.2 L876.1 243.0 L876.5 243.9 L877.0 244.0 L877.5 244.2 L877.9 243.7 L878.4 243.9 L878.8 241.8 L879.2 244.9 L879.7 244.1 L880.1 247.2 L880.6 244.5 L881.0 242.9 L881.5 242.4 L882.0 243.0 L882.4 242.5 L882.9 244.7 L883.3 245.4 L883.8 241.3 L884.2 243.3 L884.6 243.1 L885.1 245.3 L885.5 245.5 L886.0 244.3 L886.5 245.1 L886.9 244.6 L887.4 242.3 L887.8 245.2 L888.2 245.0 L888.7 243.0 L889.1 244.1 L889.6 243.4 L890.0 244.5 L890.5 248.1 L891.0 247.0 L891.4 245.7 L891.9 244.3 L892.3 246.2 L892.8 245.8 L893.2 246.8 L893.6 243.5 L894.1 246.0 L894.5 246.0 L894.8 234.5 L895.0 242.3 L895.5 246.0 L895.9 245.4 L896.4 245.2 L896.8 245.1 L897.2 245.2 L897.7 246.8 L898.1 244.4 L898.6 245.3 L899.0 244.0 L899.5 245.3 L900.0 244.8 L900.4 245.9 L900.9 245.0 L901.3 246.5 L901.8 244.9 L902.2 245.1 L902.6 245.8 L903.1 247.0 L903.5 244.6 L904.0 244.6 L904.5 243.6 L904.9 246.8 L905.4 245.6 L905.8 245.6 L906.2 245.7 L906.7 245.4 L907.1 247.1 L907.6 245.7 L908.0 245.7 L908.5 245.8 L909.0 245.8 L909.4 243.9 L909.9 245.8 L910.3 246.1 L910.8 244.9 L911.2 247.9 L911.6 245.6 L912.1 246.3 L912.5 246.3 L913.0 245.8 L913.5 246.5 L913.9 246.9 L914.4 246.3 L914.8 247.1 L915.2 222.3 L915.4 218.0 L915.7 236.1 L916.1 245.7 L916.6 247.6 L917.0 231.8 L917.4 206.7 L917.5 208.6 L918.0 246.0 L918.4 245.5 L918.8 225.5 L918.9 226.0 L919.3 246.0 L919.8 246.0 L920.2 246.8 L920.6 245.2 L921.1 238.2 L921.3 230.4 L921.5 242.8 L922.0 247.3 L922.5 247.2 L922.9 245.8 L923.4 246.1 L923.8 245.8 L924.2 247.0 L924.7 246.9 L925.1 246.7 L925.6 246.1 L926.0 247.5 L926.5 247.7 L927.0 246.5 L927.4 245.8 L927.9 246.6 L928.3 246.7 L928.8 247.6 L929.2 246.4 L929.6 246.2 L930.1 247.1 L930.5 245.6 L931.0 247.4 L931.5 245.8 L931.9 246.0 L932.4 246.0 L932.8 247.4 L933.2 246.6 L933.7 247.2 L934.1 247.7 L934.6 249.1 L935.0 248.3 L935.5 248.6 L936.0 247.8 L936.4 248.1 L936.9 247.3 L937.3 248.8 L937.8 247.1 L938.2 246.5 L938.6 247.9 L939.1 247.0 L939.5 248.6 L940.0 246.2 L940.5 247.6 L940.9 243.1 L941.0 241.2 L941.4 247.0 L941.8 249.2 L942.2 247.8 L942.7 247.2 L943.1 248.6 L943.6 248.5 L944.0 246.9 L944.5 246.3 L945.0 245.8 L945.4 248.5 L945.9 246.9 L946.3 247.0 L946.8 248.2 L947.2 247.8 L947.6 246.9 L948.1 249.2 L948.5 247.7 L949.0 248.5 L949.5 248.0 L949.9 246.9 L950.4 248.4 L950.8 248.5 L951.2 248.2 L951.7 248.1 L952.1 237.8 L952.2 237.3 L952.6 248.4 L953.0 249.6 L953.5 248.7 L954.0 246.5 L954.4 247.4 L954.9 246.5 L955.3 248.9 L955.8 247.9 L956.2 248.1 L956.6 247.9 L957.1 248.4 L957.5 249.1 L958.0 247.8 L958.5 246.5 L958.9 247.1 L959.1 239.3 L959.4 248.2 L959.8 247.4 L960.2 247.7 L960.7 248.8 L961.1 248.7 L961.6 247.5 L962.0 247.8 L962.5 249.9 L963.0 248.5 L963.4 246.9 L963.9 248.4 L964.3 246.7 L964.8 247.8 L965.0 239.3 L965.2 247.1 L965.6 248.4 L966.1 248.0 L966.5 248.6 L967.0 247.2 L967.5 249.8 L967.9 248.7 L968.4 248.3 L968.8 249.6 L969.2 249.2 L969.7 248.9 L970.1 248.0 L970.6 248.1 L971.0 248.8 L971.5 249.0 L971.9 229.0 L972.0 229.5 L972.4 247.3 L972.9 249.7 L973.3 249.5 L973.8 248.9 L974.2 248.6 L974.6 247.3 L974.9 240.2 L975.1 247.6 L975.5 248.3 L976.0 247.6 L976.5 249.0 L976.9 249.1 L977.4 247.0 L977.8 247.0 L978.2 235.3 L978.4 231.0 L978.7 249.1 L979.1 250.0 L979.6 250.2 L980.0 249.7 L980.5 249.3 L981.0 249.3 L981.4 250.0 L981.9 248.9 L982.3 249.0 L982.8 249.4 L983.2 247.6 L983.6 249.0 L984.1 248.2 L984.5 248.6 L985.0 249.4 L985.5 249.4 L985.9 249.6 L986.3 229.4 L986.4 229.9 L986.8 249.3 L987.2 249.0 L987.7 251.3 L988.1 250.6 L988.6 249.6 L989.0 249.0 L989.5 250.3 L990.0 248.1 L990.2 237.3 L990.4 245.1 L990.9 249.2 L991.3 249.8 L991.8 250.7 L992.2 241.6 L992.6 249.9 L993.1 249.3 L993.5 251.1 L994.0 249.3 L994.5 247.8 L994.9 248.6 L995.4 248.7 L995.8 250.4 L996.2 248.3 L996.7 249.3 L997.1 249.3 L997.6 250.1 L998.0 251.4 L998.5 249.8 L999.0 248.8 L999.4 248.9 L999.9 249.7 L1000.3 249.3 L1000.8 251.3 L1001.2 250.2 L1001.6 248.2 L1002.1 248.9 L1002.5 249.9 L1003.0 249.8 L1003.5 249.3 L1003.9 251.4 L1004.4 250.5 L1004.8 249.8 L1005.2 250.5 L1005.7 247.9 L1006.1 250.7 L1006.6 249.3 L1007.0 250.7 L1007.5 250.2 L1008.0 249.0 L1008.4 241.6 L1008.9 250.7 L1009.3 251.6 L1009.8 249.8 L1010.2 250.7 L1010.6 251.7 L1011.1 248.9 L1011.5 251.2 L1012.0 249.4 L1012.5 250.5 L1012.9 250.8 L1013.4 250.8 L1013.8 249.5 L1014.2 249.1 L1014.7 248.6 L1015.1 249.0 L1015.6 250.2 L1016.0 250.3 L1016.5 248.8 L1017.0 249.5 L1017.4 250.6 L1017.9 251.0 L1018.3 249.9 L1018.8 249.0 L1019.2 250.0 L1019.6 251.2 L1020.1 249.8 L1020.5 249.8 L1021.0 249.6 L1021.5 251.7 L1021.9 249.6 L1022.4 251.1 L1022.6 240.2 L1022.8 248.0 L1023.2 250.5 L1023.7 250.4 L1024.2 250.0 L1024.6 249.1 L1025.0 251.2 L1025.5 250.9 L1026.0 251.1 L1026.4 249.2 L1026.8 243.8 L1027.1 231.4 L1027.3 239.2 L1027.8 251.9 L1028.2 250.5 L1028.7 251.5 L1029.1 249.3 L1029.5 246.5 L1029.7 242.2 L1030.0 251.1 L1030.5 250.2 L1030.9 251.9 L1031.3 250.6 L1031.8 251.1 L1032.2 251.1 L1032.7 249.4 L1033.2 250.4 L1033.6 231.8 L1034.0 252.0 L1034.5 249.2 L1035.0 250.7 L1035.4 251.5 L1035.8 251.1 L1036.3 251.0 L1036.8 251.1 L1037.2 252.2 L1037.7 252.5 L1038.1 252.7 L1038.5 250.2 L1039.0 249.5 L1039.5 251.5 L1039.9 245.2 L1040.3 250.0 L1040.8 250.8 L1041.2 251.1 L1041.7 251.7 L1042.2 252.0 L1042.6 252.0 L1043.0 250.2 L1043.5 249.8 L1044.0 251.1 L1044.4 252.9 L1044.8 251.1 L1045.3 251.1 L1045.8 251.8 L1046.2 252.3 L1046.7 252.4 L1047.1 253.4 L1047.5 251.7 L1048.0 252.8 L1048.5 251.1 L1048.9 253.1 L1049.3 251.4 L1049.8 252.3 L1050.2 252.0 L1050.7 252.1 L1051.2 252.3 L1051.6 251.9 L1052.0 250.8 L1052.5 252.0 L1053.0 252.2 L1053.4 252.0 L1053.8 251.3 L1054.1 241.6 L1054.3 249.4 L1054.8 252.0 L1055.2 253.4 L1055.7 253.4 L1056.1 253.4 L1056.5 253.2 L1057.0 252.8 L1057.5 252.4 L1057.9 250.7 L1058.3 251.2 L1058.8 251.8 L1059.2 232.9 L1059.3 232.4 L1059.7 252.8 L1060.2 251.7 L1060.6 252.7 L1061.0 251.0 L1061.5 250.2 L1062.0 252.9 L1062.4 250.9 L1062.8 251.1 L1063.3 251.5 L1063.8 253.0 L1064.2 251.9 L1064.7 252.1 L1065.1 252.7 L1065.5 251.6 L1066.0 251.3 L1066.5 250.5 L1066.9 252.2 L1067.3 252.1 L1067.8 252.4 L1068.2 253.2 L1068.7 243.2 L1069.2 251.6 L1069.6 252.9 L1070.0 251.6 L1070.5 250.3 L1071.0 251.1 L1071.4 252.3 L1071.8 252.4 L1072.3 253.0 L1072.8 250.7 L1073.2 250.4 L1073.6 235.7 L1073.7 236.2 L1074.1 251.1 L1074.5 252.4 L1075.0 251.8 L1075.5 249.8 L1075.9 252.1 L1076.3 251.7 L1076.8 251.8 L1077.2 252.8 L1077.7 253.3 L1078.2 251.4 L1078.6 250.7 L1079.0 252.1 L1079.5 250.8 L1080.0 250.5 L1080.4 252.9 L1080.8 251.6 L1081.3 251.0 L1081.8 251.3 L1082.2 253.7 L1082.7 252.4 L1083.1 252.1 L1083.5 242.8 L1083.5 243.3 L1084.0 253.6 L1084.5 253.1 L1084.9 252.4 L1085.3 252.2 L1085.8 253.4 L1086.2 252.4 L1086.7 252.7 L1087.2 252.3 L1087.6 251.8 L1088.0 251.8 L1088.5 251.2 L1089.0 251.2 L1089.4 251.1 L1089.8 251.8 L1090.3 250.7 L1090.8 251.7 L1091.2 252.2 L1091.7 251.2 L1092.1 251.5 L1092.5 252.5 L1093.0 253.1 L1093.5 253.2 L1093.9 251.2 L1094.3 252.9 L1094.8 252.1 L1095.2 253.7 L1095.7 253.8 L1096.2 252.8 L1096.6 253.2 L1097.0 241.4 L1097.3 229.0 L1097.5 236.8 L1098.0 252.7 L1098.4 251.7 L1098.8 252.0 L1099.3 253.2 L1099.7 235.7 L1099.8 236.2 L1100.2 253.3 L1100.7 253.3 L1101.1 253.0 L1101.5 253.3 L1102.0 251.5 L1102.5 251.3 L1102.9 251.4 L1103.2 234.9 L1103.3 239.2 L1103.8 252.4 L1104.2 252.1 L1104.7 250.4 L1105.2 250.6 L1105.6 251.7 L1106.0 250.3 L1106.5 251.3 L1107.0 246.5 L1107.1 242.2 L1107.4 253.2 L1107.8 251.9 L1108.3 252.5 L1108.8 252.6 L1109.2 252.4 L1109.7 252.0 L1110.1 250.3 L1110.5 251.6 L1111.0 252.2 L1111.5 251.7 L1111.9 250.6 L1112.3 251.4 L1112.8 250.9 L1113.2 251.1 L1113.7 251.4 L1114.0 244.2 L1114.2 248.5 L1114.6 249.5 L1115.0 251.6 L1115.5 252.1 L1116.0 250.8 L1116.4 249.3 L1116.8 251.8 L1117.3 251.0 L1117.8 250.1 L1118.2 250.6 L1118.7 250.1 L1119.1 251.6 L1119.5 250.1 L1120.0 250.7 L1120.5 250.5 L1120.9 249.9 L1121.3 250.3 L1121.8 250.0 L1122.2 249.8 L1122.7 250.6 L1123.2 249.8 L1123.6 249.7 L1124.0 249.4 L1124.5 250.5 L1125.0 250.1 L1125.4 249.4 L1125.8 250.0 L1126.3 235.2 L1126.5 227.4 L1126.8 239.8 L1127.2 250.1 L1127.7 248.6 L1128.1 248.6 L1128.5 248.7 L1129.0 248.7 L1129.5 249.4 L1129.9 248.5 L1130.3 249.3 L1130.8 248.3 L1131.2 249.0 L1131.7 249.7 L1132.2 249.1 L1132.6 249.8 L1133.0 249.3 L1133.5 239.6 L1133.7 231.8 L1134.0 244.2 L1134.4 247.7 L1134.8 248.0 L1135.3 248.6 L1135.8 248.0 L1136.2 247.9 L1136.7 249.0 L1137.1 247.9 L1137.5 248.0 L1138.0 248.6 L1138.3 238.3 L1138.5 242.6 L1138.9 247.9 L1139.3 247.1 L1139.8 247.7 L1140.2 248.3 L1140.7 248.1 L1141.2 247.8 L1141.6 247.7 L1142.0 246.6 L1142.5 246.6 L1143.0 246.9 L1143.4 246.7 L1143.8 247.2 L1144.3 247.2 L1144.8 247.1 L1145.2 247.0 L1145.7 247.7 L1146.1 247.4 L1146.5 246.8 L1147.0 246.2 L1147.5 235.4 L1147.5 234.9 L1147.9 246.9 L1148.3 246.9 L1148.8 246.2 L1149.2 246.5 L1149.7 247.1 L1150.2 247.3 L1150.6 245.5 L1151.0 246.2 L1151.5 233.7 L1152.0 246.1 L1152.4 245.3 L1152.8 245.6 L1153.3 245.5 L1153.8 245.6 L1154.2 244.9 L1154.7 245.6 L1155.1 245.6 L1155.5 244.3 L1156.0 245.2 L1156.5 244.9 L1156.9 244.4 L1157.3 245.2 L1157.8 244.1 L1158.2 244.6 L1158.7 244.7 L1159.2 244.1 L1159.6 244.8 L1160.0 241.8 L1160.3 229.4 L1160.5 237.2 L1161.0 243.5 L1161.4 243.0 L1161.8 242.8 L1162.3 243.4 L1162.8 243.3 L1163.2 243.1 L1163.7 243.0 L1164.1 242.7 L1164.3 234.9 L1164.5 242.2 L1165.0 241.9 L1165.5 242.2 L1165.9 243.0 L1166.3 242.7 L1166.8 241.7 L1167.2 241.3 L1167.7 241.8 L1168.2 241.1 L1168.6 241.3 L1169.0 241.7 L1169.5 242.0 L1170.0 242.1 L1170.4 242.2 L1170.8 241.2 L1171.3 240.9 L1171.8 242.2 L1172.2 241.1 L1172.7 240.9 L1173.1 240.9 L1173.5 242.1 L1174.0 240.9 L1174.5 241.4 L1174.9 241.3 L1175.3 240.3 L1175.8 240.5 L1176.2 240.3 L1176.7 240.8 L1177.2 240.8 L1177.6 240.0 L1178.0 234.8 L1178.1 234.3 L1178.5 239.4 L1179.0 240.4 L1179.4 240.0 L1179.8 240.9 L1180.3 240.7 L1180.8 240.8 L1181.2 240.0 L1181.7 240.5 L1182.1 239.8 L1182.5 239.6 L1183.0 239.3 L1183.5 239.9 L1183.9 239.7 L1184.3 239.2 L1184.8 238.8 L1185.2 239.0 L1185.7 239.6 L1186.2 238.8 L1186.6 239.7 L1187.0 238.7 L1187.5 238.7 L1188.0 239.2 L1188.4 238.7 L1188.8 237.7 L1189.3 238.6 L1189.8 238.3 L1190.2 237.6 L1190.7 238.3 L1191.1 238.2 L1191.5 238.3 L1192.0 238.2 L1192.5 237.9 L1192.9 238.6 L1193.3 238.3 L1193.8 238.4 L1194.2 238.5 L1194.7 239.1 L1195.2 239.4 L1195.6 239.6 L1196.0 238.6 L1196.5 238.5 L1197.0 238.3 L1197.4 239.1 L1197.8 238.5 L1198.3 239.8 L1198.8 238.9 L1199.2 239.4 L1199.7 239.7 L1200.1 239.6 L1200.5 240.8 L1201.0 240.3 L1201.5 240.5 L1201.7 232.4 L1201.9 240.2 L1202.3 243.0 L1202.8 242.3 L1203.2 244.7 L1203.7 244.1 L1204.2 245.7 L1204.6 245.7 L1205.0 234.9 L1205.3 222.5 L1205.5 230.3 L1206.0 249.5 L1206.4 250.8 L1206.8 251.5 L1207.3 251.5 L1208.3 252.5 L1208.5 126.0"/>
<path stroke="none" fill="#c80000" d="M678.9 128.0 L679.4 128.0 L679.8 112.0 L680.3 75.1 L680.8 52.1 L681.2 40.7 L681.5 38.9 L681.7 39.6 L682.1 48.5 L682.6 69.3 L683.0 103.7 L683.5 128.0 L684.0 128.0 L684.4 128.0z M797.8 205.0 L798.2 205.0 L798.7 205.0 L799.1 165.3 L799.5 153.3 L799.6 154.1 L800.0 183.6 L800.5 205.0 L801.0 205.0 L801.4 205.0z"/>
<path stroke="none" fill="#c80000" fill-opacity=".38" d="M678.4 224.0 L678.9 224.0 L679.4 162.7 L679.8 112.0 L680.3 75.1 L680.8 52.1 L681.2 40.7 L681.5 38.9 L681.7 39.6 L682.1 48.5 L682.6 69.3 L683.0 103.7 L683.5 152.6 L684.0 218.2 L684.4 224.0z"/>
</g>
<g>
<text x="84.3" y="345.8" text-anchor="middle">30</text>
<text x="171.3" y="345.8" text-anchor="middle">50</text>
<text x="289.3" y="345.8" text-anchor="middle">100</text>
<text x="407.3" y="345.8" text-anchor="middle">200</text>
<text x="476.3" y="345.8" text-anchor="middle">300</text>
<text x="563.3" y="345.8" text-anchor="middle">500</text>
<text x="681.3" y="345.8" text-anchor="middle">1K</text>
<text x="799.3" y="345.8" text-anchor="middle">2K</text>
<text x="868.3" y="345.8" text-anchor="middle">3K</text>
<text x="955.3" y="345.8" text-anchor="middle">5K</text>
<text x="1073.3" y="345.8" text-anchor="middle">10K</text>
<text x="1191.3" y="345.8" text-anchor="middle">20K</text>
<text x="1209.3" y="346.3">Hz</text>
<text x="1211.5" y="40.3" style="letter-spacing:-.9px">dB</text>
<text x="1210.6" y="54.5" style="letter-spacing:-.5px">-10</text>
<text x="1210.6" y="74.7" style="letter-spacing:-.5px">-20</text>
<text x="1210.6" y="94.9" style="letter-spacing:-.5px">-30</text>
<text x="1210.6" y="115.1" style="letter-spacing:-.5px">-40</text>
<text x="1210.6" y="135.2" style="letter-spacing:-.5px">-50</text>
<text x="1210.6" y="155.4" style="letter-spacing:-.5px">-60</text>
<text x="1210.6" y="175.6" style="letter-spacing:-.5px">-70</text>
<text x="1210.6" y="195.8" style="letter-spacing:-.5px">-80</text>
<text x="1210.6" y="216.0" style="letter-spacing:-.5px">-90</text>
<text x="1210.6" y="236.2" style="letter-spacing:-.5px">-100</text>
<text x="1210.6" y="256.4" style="letter-spacing:-.5px">-110</text>
<text x="1210.6" y="276.6" style="letter-spacing:-.5px">-120</text>
<text x="1210.6" y="296.8" style="letter-spacing:-.5px">-130</text>
<text x="1210.6" y="317.0" style="letter-spacing:-.5px">-140</text>
<text x="56.8" y="47" style="letter-spacing:.1px">До переделки</text>
<text x="56.6" y="63.3" style="fill:#c00000;letter-spacing:.03px">После переделки</text>
</g>
<!-- legend icon -->
<g>
<rect x="16" y="41" width="24" height="24" fill="#000"/>
<rect x="17.3" y="42.3" width="21.4" height="21.4" rx="3.2" fill="#000" stroke="#fff" stroke-width="1.5"/>
<g stroke="#8c8c8c" stroke-width="1" shape-rendering="crispEdges"><path d="M22.5 44.5v16M29.5 44.5v16M33.500 44.5v16M35.500 44.5v16M19 45.500h18M19 50.500h18M19 55.500h18"/></g>
<path d="M26.600 44.3v16M32.900 53.2v8M35.600 56v5.500" stroke="#00f000" stroke-width="1.3" fill="none"/>
<polyline points="19,61.5 20,60.5 20.5,58.5 21.2,60.8 22.5,61 24,61.3 25,59.800 26,59.300 27.5,59.500 28.5,61.200 30,60.800 31,61.400 32,60.200 33.5,61.300 34.5,61 37,61.200" fill="none" stroke="#00f000" stroke-width="1.2"/>
</g>
</svg>
<!-- vertical scrollbar -->
<div class="abs track" style="left:1236px;top:30px;width:18px;height:304px"></div>
<div class="abs btn" style="left:1236px;top:30px;width:18px;height:16px"></div>
<div class="abs btn" style="left:1236px;top:72px;width:18px;height:183px"></div>
<div class="abs btn" style="left:1236px;top:317px;width:18px;height:17px"></div>
<div class="abs btn" style="left:1236px;top:334px;width:18px;height:18px"></div>
<!-- horizontal scrollbar -->
<div class="abs track" style="left:4px;top:352px;width:1195px;height:18px"></div>
<div class="abs btn" style="left:4px;top:352px;width:17px;height:18px"></div>
<div class="abs btn" style="left:272px;top:352px;width:908px;height:18px"></div>
<div class="abs btn" style="left:1182px;top:352px;width:17px;height:18px"></div>
<div class="abs btn" style="left:1199px;top:352px;width:18px;height:18px"></div>
<div class="abs btn" style="left:1217px;top:352px;width:18px;height:18px"></div>
<div class="abs btn" style="left:1236px;top:352px;width:18px;height:18px"></div>
<svg class="abs" style="left:0;top:0;pointer-events:none" width="1261" height="406" viewBox="0 0 1261 406">
<path d="M1241 39h7l-3.5-4z M1241 324h7l-3.5 4z M14.5 356.5v8l-4-4z M1188.5 356.5v8l4-4z" fill="#000"/>
<g transform="translate(1244.2 342.2)" fill="none" stroke="#000" stroke-width="2.1"><circle cx="0" cy="0" r="4.6"/><path d="M3.4 3.4l3.7 3.7" stroke-width="2.6"/><path d="M-3.2 0h6.4M0 -3.2v6.4" stroke-width="2"/></g><g transform="translate(1207.2 360.4)" fill="none" stroke="#000" stroke-width="2.1"><circle cx="0" cy="0" r="4.6"/><path d="M3.4 3.4l3.7 3.7" stroke-width="2.6"/><path d="M-3.2 0h6.4M0 -3.2v6.4" stroke-width="2"/></g><g transform="translate(1224.8 360.4)" fill="none" stroke="#000" stroke-width="2.1"><circle cx="0" cy="0" r="4.6"/><path d="M3.4 3.4l3.7 3.7" stroke-width="2.6"/><path d="M-3.2 0h6.4" stroke-width="2"/></g><g transform="translate(1244 360.4)" fill="none" stroke="#000" stroke-width="2.1"><circle cx="0" cy="0" r="4.6"/><path d="M3.4 3.4l3.7 3.7" stroke-width="2.6"/><path d="M-3.2 0h6.4" stroke-width="2"/></g>
<g fill="#fff"><rect x="1255" y="392" width="2" height="2"/><rect x="1251" y="396" width="2" height="2"/><rect x="1255" y="396" width="2" height="2"/><rect x="1247" y="400" width="2" height="2"/><rect x="1251" y="400" width="2" height="2"/><rect x="1255" y="400" width="2" height="2"/></g><g fill="#4c4e22"><rect x="1254" y="391" width="2" height="2"/><rect x="1250" y="395" width="2" height="2"/><rect x="1254" y="395" width="2" height="2"/><rect x="1246" y="399" width="2" height="2"/><rect x="1250" y="399" width="2" height="2"/><rect x="1254" y="399" width="2" height="2"/></g>
</svg>
<!-- status -->
<div id="status" class="abs"></div>
<div id="stext" class="abs">Cursor:  139 Hz,  left = -80.23 dB,  right = -78.31 dB</div>
<!-- toolbar -->
<div class="abs btn tb" style="left:289px"></div>
<div class="abs btn tb" style="left:317px"></div>
<div class="abs btn tb" style="left:345px"></div>
<div class="abs btn tb" style="left:373px"></div>
<div class="abs nar" style="left:409px;top:379.8px">Scale</div>
<div class="abs" style="left:442px;top:376px;width:71px;height:21px;box-sizing:border-box;background:#fff;border:1px solid;border-color:#8c8c7c #fff #fff #8c8c7c;box-shadow:inset 1px 1px 0 #55554a"></div>
<div class="abs nar" style="left:446.3px;top:379.8px">Log</div>
<div class="abs btn" style="left:495px;top:378px;width:16px;height:17px"></div>
<svg class="abs" style="left:0;top:0;pointer-events:none" width="1261" height="406" viewBox="0 0 1261 406">
<text x="301.6" y="394.4" text-anchor="middle" style="font-family:'Liberation Serif',serif;font-weight:bold;font-size:23.5px;letter-spacing:0">A</text>
<!-- recycle -->
<rect x="320" y="376" width="20" height="21" fill="#c0c0c0"/>
<g fill="#0000e0" stroke="none">
<path d="M327.8 377.9 L330.4 376.1 L334.1 376.1 L336.3 378.3 L337.1 377.2 L338.9 377.2 L338.9 383.8 L331.9 383.8 L331.9 382.3 L334.1 381.2 L332.6 379.4 L330.8 379.0 L328.9 380.1z"/>
<path d="M320.8 379.4 L327.1 379.4 L327.1 385.3 L325.6 386.8 L324.1 384.6 L324.1 386.8 L326.0 389.7 L326.0 391.6 L323.4 391.6 L320.8 387.9z"/>
<path d="M338.9 385.3 L338.9 389.0 L336.0 393.4 L332.6 396.4 L330.8 396.4 L327.1 392.0 L327.1 390.5 L330.8 386.8 L331.9 387.9 L333.4 387.9 L333.4 391.2 L336.3 388.3 L337.4 385.3z"/>
</g>
<!-- wrench -->
<g fill="none" stroke-linecap="round">
<g transform="translate(.9 .9)" stroke="#484848"><path d="M349 394.8L359.6 385.4" stroke-width="3.6"/><path d="M367.43 381.7A4.4 4.4 0 1 1 364.8 379.07" stroke-width="3.7" stroke-linecap="butt"/></g>
<g transform="translate(-.8 -.8)" stroke="#fff"><path d="M349 394.8L359.6 385.4" stroke-width="3.6"/><path d="M367.43 381.7A4.4 4.4 0 1 1 364.8 379.07" stroke-width="3.7" stroke-linecap="butt"/></g>
<g stroke="#b4b4b4"><path d="M349 394.8L359.6 385.4" stroke-width="3.2"/><path d="M367.43 381.7A4.4 4.4 0 1 1 364.8 379.07" stroke-width="3.3" stroke-linecap="butt"/></g>
</g>
<!-- floppy -->
<rect x="376" y="377" width="20.5" height="20" fill="#000"/>
<rect x="377" y="378" width="18.5" height="18" fill="#808000"/>
<rect x="380" y="378" width="12.5" height="8.3" fill="#ece9d8"/>
<rect x="380" y="389.6" width="12.6" height="7" fill="#000"/>
<rect x="389.3" y="390.2" width="2.8" height="5.4" fill="#fff"/>
<rect x="393.2" y="378" width="1.8" height="1.6" fill="#fff"/>
<path d="M499.500 384.800h8l-4 4.2z" fill="#000"/>
</svg>
</body></html>
